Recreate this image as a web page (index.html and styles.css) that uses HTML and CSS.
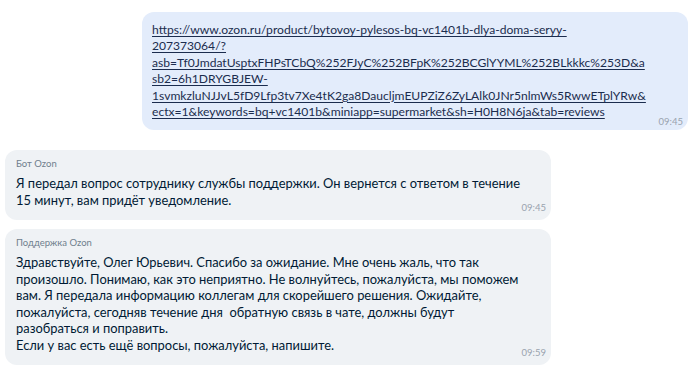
FILE: index.html
```html
<!DOCTYPE html>
<html lang="ru">
<head>
<meta charset="utf-8">
<title>Чат Ozon</title>
<link rel="stylesheet" href="styles.css">
</head>
<body>
<main class="chat">
  <div class="msg msg-out">
    <div class="bubble bubble-out">
      <div class="body">
        <a class="link" href="#">https://www.ozon.ru/product/bytovoy-pylesos-bq-vc1401b-dlya-doma-seryy-<br>207373064/?<br>asb=Tf0JmdatUsptxFHPsTCbQ%252FJyC%252BFpK%252BCGlYYML%252BLkkkc%253D&amp;a<br>sb2=6h1DRYGBJEW-<br>1svmkzluNJJvL5fD9Lfp3tv7Xe4tK2ga8DaucljmEUPZiZ6ZyLAlk0JNr5nlmWs5RwwETplYRw&amp;<br>ectx=1&amp;keywords=bq+vc1401b&amp;miniapp=supermarket&amp;sh=H0H8N6ja&amp;tab=reviews</a>
      </div>
      <span class="time time-out">09:45</span>
    </div>
  </div>

  <div class="msg msg-in">
    <div class="bubble bubble-in">
      <div class="body">
        <div class="author">Бот Ozon</div>
        <p class="text">Я передал вопрос сотруднику службы поддержки. Он вернется с ответом в течение<br>15 минут, вам придёт уведомление.</p>
      </div>
      <span class="time">09:45</span>
    </div>
  </div>

  <div class="msg msg-in">
    <div class="bubble bubble-in">
      <div class="body">
        <div class="author">Поддержка Ozon</div>
        <p class="text">Здравствуйте, Олег Юрьевич. Спасибо за ожидание. Мне очень жаль, что так<br>произошло. Понимаю, как это неприятно. Не волнуйтесь, пожалуйста, мы поможем<br>вам. Я передала информацию коллегам для скорейшего решения. Ожидайте,<br>пожалуйста, сегодняв течение дня&nbsp; обратную связь в чате, должны будут<br>разобраться и поправить.<br>Если у вас есть ещё вопросы, пожалуйста, напишите.</p>
      </div>
      <span class="time">09:59</span>
    </div>
  </div>
</main>
</body>
</html>
```

FILE: styles.css
```css
* { box-sizing: border-box; }

html, body {
  margin: 0;
  padding: 0;
  background: #ffffff;
}

body {
  font-family: Lato, "Noto Sans", "Liberation Sans", sans-serif;
  color: #001a34;
}

.chat {
  display: flex;
  flex-direction: column;
  padding: 12px 12px 0 5px;
}

.msg {
  display: flex;
}

.msg-out {
  justify-content: flex-end;
  margin-bottom: 20px;
}

.msg-in {
  justify-content: flex-start;
  margin-bottom: 9px;
}

.bubble {
  width: 546px;
  display: flex;
  flex-direction: column;
  border-radius: 12px;
}

.bubble-out {
  background: #e3ecfb;
  padding: 10px 5px 1px 10px;
}

.bubble-in {
  background: #eff2f5;
  padding: 7px 5px 5px 11px;
}

.body {
  min-width: 0;
}

.link {
  display: block;
  font-size: 12.1px;
  line-height: 16.4px;
  color: #1b2c4e;
  text-decoration: underline;
  text-underline-offset: 2px;
  white-space: nowrap;
}

.author {
  font-size: 9.5px;
  line-height: 14px;
  color: #707f8d;
  margin-bottom: 4px;
}

.text {
  margin: 0;
  font-size: 12.9px;
  line-height: 16.5px;
  color: #001a34;
}

.time {
  align-self: flex-end;
  margin-top: -7px;
  font-size: 9.5px;
  line-height: 14px;
  color: #99a3ae;
}

.time-out {
  margin-top: -5px;
}
```
